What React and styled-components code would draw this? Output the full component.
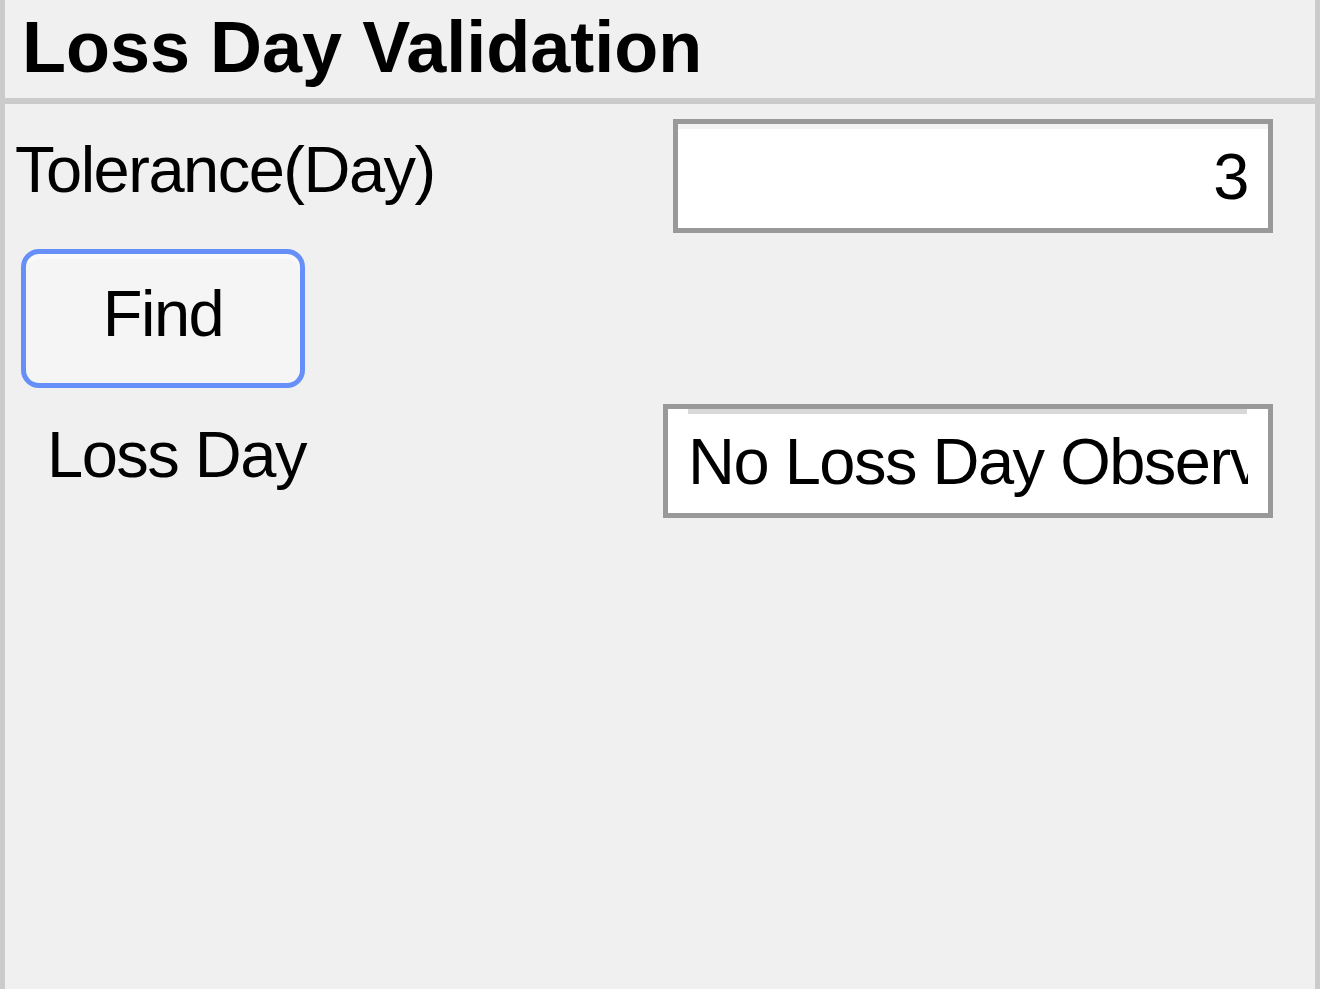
import React from 'react';
import styled, { createGlobalStyle } from 'styled-components';

const GlobalStyle = createGlobalStyle`
    html, body {
        margin: 0;
        padding: 0;
        background: #f0f0f0;
    }
    * {
        box-sizing: border-box;
    }
`;

export default function App() {
    return (
        <>
            <GlobalStyle />
            <Panel>
                <Header>
                    <Title>Loss Day Validation</Title>
                </Header>
                <Body>
                    <Row>
                        <Label indent={10}>Tolerance(Day)</Label>
                        <Field readOnly value="3" align="right" width={600} />
                    </Row>
                    <Row>
                        <FindButton type="button">Find</FindButton>
                    </Row>
                    <Row>
                        <Label indent={42}>Loss Day</Label>
                        <Field readOnly value="No Loss Day Observed" align="left" width={610} strip />
                    </Row>
                </Body>
            </Panel>
        </>
    );
}

const Panel = styled.div`
    min-height: 100vh;
    width: 1320px;
    display: flex;
    flex-direction: column;
    background: #f0f0f0;
    border-left: 5px solid #cbcbcb;
    border-right: 5px solid #cbcbcb;
    font-family: "Liberation Sans", Arial, sans-serif;
    color: #000;
`;

const Header = styled.div`
    height: 104px;
    padding: 11px 0 0 17px;
    border-bottom: 6px solid #cbcbcb;
`;

const Title = styled.div`
    font-size: 72px;
    line-height: 72px;
    font-weight: bold;
    white-space: nowrap;
`;

const Body = styled.div`
    flex: 1;
    display: flex;
    flex-direction: column;
    gap: 16px;
    padding: 15px 42px 0 0;
`;

const Row = styled.div`
    display: flex;
    align-items: flex-start;
    justify-content: space-between;
`;

const Label = styled.div`
    padding: 18px 0 0 ${p => p.indent}px;
    font-size: 65px;
    line-height: 65px;
    letter-spacing: -1.5px;
    white-space: nowrap;
`;

const Field = styled.input`
    width: ${p => p.width}px;
    height: 114px;
    margin: 0;
    padding: 0 20px;
    border: 5px solid #999999;
    border-radius: 0;
    outline: none;
    font-family: "Liberation Sans", Arial, sans-serif;
    font-size: 65px;
    letter-spacing: -1.5px;
    color: #000;
    text-align: ${p => p.align};
    background: ${p => (p.strip
        ? 'linear-gradient(#d8d8d8, #d8d8d8) no-repeat 20px 0 / calc(100% - 41px) 5px, #fff'
        : 'linear-gradient(#f3f3f3, #f3f3f3) no-repeat 0 0 / 100% 5px, #fff')};
`;

const FindButton = styled.button`
    margin-left: 16px;
    width: 284px;
    height: 139px;
    padding: 0 0 10px 0;
    border: 5px solid #6690f8;
    border-radius: 18px;
    background: #f5f5f5;
    box-shadow: inset 0 5px 0 #fafafa;
    font-family: "Liberation Sans", Arial, sans-serif;
    font-size: 65px;
    letter-spacing: -1.5px;
    color: #000;
    cursor: pointer;
`;
